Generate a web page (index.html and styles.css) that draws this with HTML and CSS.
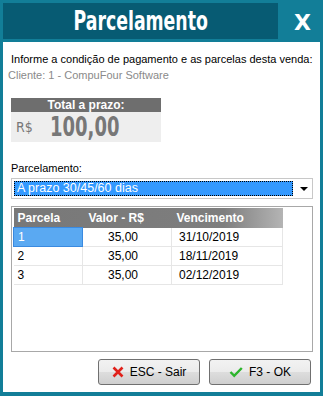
FILE: index.html
```html
<!DOCTYPE html>
<html>
<head>
<meta charset="utf-8">
<link rel="stylesheet" href="styles.css">
</head>
<body>
<div class="window">
  <div class="titlebar">
    <div class="title"><span class="title-text">Parcelamento</span></div>
    <div class="close">X</div>
  </div>
  <div class="content">
    <div class="info">Informe a condição de pagamento e as parcelas desta venda:</div>
    <div class="client">Cliente: 1 - CompuFour Software</div>
    <div class="total">
      <div class="total-head">Total a prazo:</div>
      <div class="total-body"><span class="cur">R$</span><span class="amount">100,00</span></div>
    </div>
    <div class="label">Parcelamento:</div>
    <div class="combo">
      <div class="combo-sel">A prazo 30/45/60 dias</div>
      <div class="combo-arrow"></div>
    </div>
    <div class="grid">
      <table>
        <thead>
          <tr><th class="c1">Parcela</th><th class="c2">Valor - R$</th><th class="c3">Vencimento</th></tr>
        </thead>
        <tbody>
          <tr><td class="c1 sel">1</td><td class="c2">35,00</td><td class="c3">31/10/2019</td></tr>
          <tr><td class="c1">2</td><td class="c2">35,00</td><td class="c3">18/11/2019</td></tr>
          <tr><td class="c1">3</td><td class="c2">35,00</td><td class="c3">02/12/2019</td></tr>
        </tbody>
      </table>
    </div>
    <div class="buttons">
      <div class="btn"><svg width="12" height="12" viewBox="0 0 12 12"><path d="M1.5 1.5 L10.5 10.5 M10.5 1.5 L1.5 10.5" stroke="#e0201a" stroke-width="2.6" stroke-linecap="butt"/></svg><span>ESC - Sair</span></div>
      <div class="btn"><svg width="14" height="12" viewBox="0 0 14 12"><path d="M1.5 6 L5.2 9.8 L12.8 2" stroke="#2cb52c" stroke-width="2.4" fill="none"/></svg><span>F3 - OK</span></div>
    </div>
  </div>
</div>
</body>
</html>
```
FILE: styles.css
```css
html, body {
  margin: 0;
  padding: 0;
  background: #ffffff;
}
.window {
  width: 323px;
  height: 396px;
  box-sizing: border-box;
  background: #127e98;
  padding: 0 3px 4px 3px;
  display: flex;
  flex-direction: column;
}
.titlebar {
  height: 42px;
  display: flex;
  padding: 3px 0 3px 0;
  box-sizing: border-box;
}
.title {
  width: 275px;
  background: #075b73;
  display: flex;
  align-items: center;
  justify-content: center;
}
.title-text {
  font-family: "DejaVu Sans Condensed", "DejaVu Sans", sans-serif;
  font-weight: bold;
  font-size: 26px;
  color: #ffffff;
  display: inline-block;
  transform: scaleX(0.74);
}
.close {
  flex: 1;
  display: flex;
  align-items: center;
  justify-content: center;
  color: #ffffff;
  font-family: "DejaVu Sans", sans-serif;
  font-weight: bold;
  font-size: 22px;
  padding-top: 2px;
  padding-left: 7px;
}
.content {
  flex: 1;
  background: #ffffff;
  padding: 0 7px 0 8px;
  font-family: "Liberation Sans", Arial, sans-serif;
  font-size: 11px;
  color: #000000;
  display: flex;
  flex-direction: column;
}
.info {
  margin-top: 10px;
  line-height: 14px;
  height: 14px;
  white-space: nowrap;
}
.client {
  margin-top: 2px;
  margin-left: -3px;
  line-height: 14px;
  height: 14px;
  color: #8a8a8a;
}
.total {
  margin-top: 16px;
  width: 150px;
}
.total-head {
  height: 14px;
  line-height: 14px;
  background: #6e6e6e;
  color: #ffffff;
  font-weight: bold;
  text-align: center;
  font-size: 12px;
}
.total-body {
  height: 30px;
  background: #eeeeee;
  display: flex;
  align-items: center;
  color: #777777;
}
.cur {
  margin-left: 5px;
  font-family: "DejaVu Sans Condensed", "DejaVu Sans", sans-serif;
  font-size: 14px;
}
.amount {
  margin-left: 17px;
  font-family: "DejaVu Sans Condensed", "DejaVu Sans", sans-serif;
  font-weight: bold;
  font-size: 26px;
  display: inline-block;
  transform: scaleX(0.77);
  transform-origin: left center;
}
.label {
  margin-top: 19px;
  line-height: 14px;
  height: 14px;
}
.combo {
  margin-top: 3px;
  height: 21px;
  box-sizing: border-box;
  border: 1px solid #c8c8c8;
  display: flex;
  align-items: center;
  padding: 2px;
  font-size: 12.5px;
}
.combo-sel {
  width: 279px;
  height: 15px;
  box-sizing: border-box;
  background: #3399ff;
  border: 1px dotted #000000;
  color: #ffffff;
  line-height: 13px;
  padding-left: 2px;
}
.combo-arrow {
  margin-left: 7px;
  width: 0;
  height: 0;
  border-left: 4px solid transparent;
  border-right: 4px solid transparent;
  border-top: 4px solid #000000;
}
.grid {
  margin-top: 7px;
  height: 146px;
  box-sizing: border-box;
  border: 1px solid #a8a8a8;
  padding: 1px;
}
table {
  border-collapse: collapse;
  width: 270px;
  font-size: 12px;
}
thead tr {
  background: linear-gradient(to right, #787878 0%, #7e7e7e 78%, #b4b4b4 100%);
}
th {
  height: 19px;
  padding: 0;
  text-align: left;
  color: #ffffff;
  font-weight: bold;
}
th.c1 { padding-left: 4px; width: 65px; }
th.c2 { padding-left: 6px; width: 83px; }
th.c3 { padding-left: 5px; }
td {
  height: 18px;
  padding: 0;
  border-right: 1px solid #e6e6e6;
  border-bottom: 1px solid #e6e6e6;
}
td.c1 { padding-left: 4px; }
td.c2 { text-align: center; padding-right: 8px; }
td.c3 { padding-left: 7px; }
td.sel {
  background: #5aa9f2;
  color: #ffffff;
  border: 1px solid #3a8ae0;
}
.buttons {
  margin-top: 7px;
  display: flex;
  justify-content: flex-end;
  gap: 9px;
  padding-right: 2px;
}
.btn {
  width: 102px;
  height: 26px;
  box-sizing: border-box;
  border: 1px solid #707070;
  border-radius: 3px;
  background: linear-gradient(to bottom, #f2f2f2 0%, #ebebeb 50%, #dddddd 51%, #cfcfcf 100%);
  display: flex;
  align-items: center;
  justify-content: center;
  gap: 6px;
  font-size: 12px;
}
```
